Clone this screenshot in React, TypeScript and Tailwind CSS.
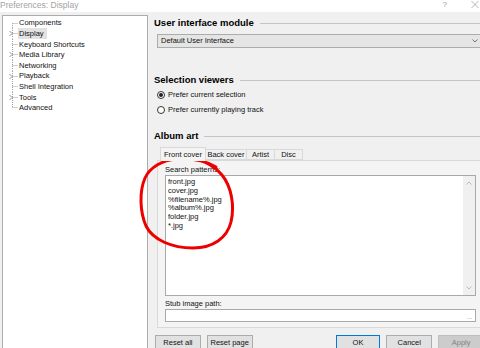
import React from "react";

const treeItems = [
  { label: "Components", expandable: false },
  { label: "Display", expandable: true, selected: true },
  { label: "Keyboard Shortcuts", expandable: false },
  { label: "Media Library", expandable: true },
  { label: "Networking", expandable: false },
  { label: "Playback", expandable: true },
  { label: "Shell Integration", expandable: false },
  { label: "Tools", expandable: true },
  { label: "Advanced", expandable: false },
];

const patterns = ["front.jpg", "cover.jpg", "%filename%.jpg", "%album%.jpg", "folder.jpg", "*.jpg"];

function TreeRow({ label, expandable, selected, first, last }: { label: string; expandable: boolean; selected?: boolean; first: boolean; last: boolean }) {
  return (
    <div className="flex h-[10.6px] items-center">
      <svg width="16" height="10.6" className="shrink-0">
        <line x1="9.5" y1={first ? 5.3 : 0} x2="9.5" y2={last ? 5.3 : 10.6} stroke="#a0a0a0" strokeDasharray="1 1" />
        <line x1="9.5" y1="5.5" x2="15" y2="5.5" stroke="#a0a0a0" strokeDasharray="1 1" />
        {expandable && <path d="M6.5 3 L9 5.5 L6.5 8" fill="none" stroke="#8a8a8a" strokeWidth="0.9" />}
      </svg>
      <span className={selected ? "bg-[#e2e2e2] pl-[1px] pr-[3px] -ml-[1px] leading-[11px]" : "leading-[11px]"}>{label}</span>
    </div>
  );
}

function Heading({ children }: { children: React.ReactNode }) {
  return (
    <div className="flex h-[12px] items-center pl-[2px]">
      <span className="text-[9.5px] font-bold leading-[12px] text-black">{children}</span>
      <div className="ml-[6px] h-px flex-1 bg-[#c4c4c4]" />
    </div>
  );
}

function Radio({ checked, label }: { checked?: boolean; label: string }) {
  return (
    <div className="ml-[5px] flex h-[10px] items-center gap-[3px]">
      <div className="flex h-[8px] w-[8px] items-center justify-center rounded-full border border-[#333] bg-white">
        {checked && <div className="h-[4px] w-[4px] rounded-full bg-[#222]" />}
      </div>
      <span className="leading-[10px]">{label}</span>
    </div>
  );
}

function Button({ label, className }: { label: string; className: string }) {
  return (
    <div className={"flex h-[16px] items-center justify-center border " + className}>
      <span className="leading-[10px]">{label}</span>
    </div>
  );
}

export default function App() {
  return (
    <div
      className="relative h-[348px] w-[480px] overflow-hidden bg-[#f0f0f0] text-[7.5px] text-[#111]"
      style={{ fontFamily: '"Liberation Sans", Arial, sans-serif' }}
    >
      {/* title bar */}
      <div className="flex h-[12px] items-start justify-between bg-white">
        <span className="ml-0 text-[8.5px] leading-[10px] text-[#a3a3a3]">Preferences: Display</span>
        <div className="flex items-start">
          <span className="mr-[24px] text-[8px] leading-[9px] text-[#9a9a9a]">?</span>
          <svg width="8" height="8" className="mr-[1px] mt-[1px]">
            <path d="M0.5 0 L7.5 7 M7.5 0 L0.5 7" stroke="#9a9a9a" strokeWidth="0.7" />
          </svg>
        </div>
      </div>

      <div className="flex">
        {/* tree */}
        <div className="ml-[2px] mt-[3px] h-[400px] w-[146px] shrink-0 border border-[#acacac] bg-white pt-[1.7px]">
          {treeItems.map((item, i) => (
            <TreeRow
              key={item.label}
              label={item.label}
              expandable={item.expandable}
              selected={item.selected}
              first={i === 0}
              last={i === treeItems.length - 1}
            />
          ))}
        </div>

        {/* right pane */}
        <div className="ml-[4px] flex w-[332px] shrink-0 flex-col">
          <div className="mt-[5px]">
            <Heading>User interface module</Heading>
          </div>
          <div className="ml-[5px] mt-[5px] flex h-[14px] items-center justify-between border border-[#acacac] bg-[#e5e5e5] pl-[3px] pr-[5px]">
            <span className="leading-[10px]">Default User Interface</span>
            <svg width="6" height="4">
              <path d="M0.5 0.5 L3 3 L5.5 0.5" fill="none" stroke="#555" strokeWidth="0.8" />
            </svg>
          </div>

          <div className="mt-[26px]">
            <Heading>Selection viewers</Heading>
          </div>
          <div className="mt-[4px]">
            <Radio checked label="Prefer current selection" />
          </div>
          <div className="mt-[5px]">
            <Radio label="Prefer currently playing track" />
          </div>

          <div className="mt-[15px]">
            <Heading>Album art</Heading>
          </div>

          {/* tabs */}
          <div className="ml-[5px] mt-[5px] flex h-[13px] items-end pl-[3px]">
            <div className="relative z-10 -mb-px flex h-[14px] w-[46px] items-center justify-center border border-b-0 border-[#d9d9d9] bg-[#f4f4f4]">
              <span className="leading-[10px]">Front cover</span>
            </div>
            <div className="flex h-[11px] w-[41px] items-center justify-center border border-l-0 border-[#d9d9d9] bg-[#f0f0f0]">
              <span className="leading-[10px]">Back cover</span>
            </div>
            <div className="flex h-[11px] w-[28px] items-center justify-center border border-l-0 border-[#d9d9d9] bg-[#f0f0f0]">
              <span className="leading-[10px]">Artist</span>
            </div>
            <div className="flex h-[11px] w-[28px] items-center justify-center border border-l-0 border-[#d9d9d9] bg-[#f0f0f0]">
              <span className="leading-[10px]">Disc</span>
            </div>
          </div>

          <div className="ml-[5px] flex h-[168px] w-[324px] flex-col border border-[#d9d9d9] bg-[#f4f4f4] px-[7px]">
            <div className="mt-[4px] h-[10px] leading-[10px]">Search patterns:</div>
            <div className="flex h-[121px] w-[311px] border border-[#a9a9a9] bg-white">
              <div className="flex-1 pl-[2px] pt-[2px]">
                {patterns.map((p) => (
                  <div key={p} className="h-[8.8px] leading-[8.8px]">
                    {p}
                  </div>
                ))}
              </div>
              <div className="flex w-[12px] flex-col items-center justify-between bg-[#f0f0f0] py-[5px]">
                <svg width="6" height="4">
                  <path d="M0.5 3.5 L3 1 L5.5 3.5" fill="none" stroke="#b5b5b5" strokeWidth="0.9" />
                </svg>
                <svg width="6" height="4">
                  <path d="M0.5 0.5 L3 3 L5.5 0.5" fill="none" stroke="#b5b5b5" strokeWidth="0.9" />
                </svg>
              </div>
            </div>
            <div className="mt-[3px] h-[10px] leading-[10px]">Stub image path:</div>
            <div className="flex h-[13px] w-[311px] items-end justify-end border border-[#a9a9a9] bg-white pb-[1px] pr-[3px]">
              <span className="text-[6px] leading-[6px] text-[#666]">...</span>
            </div>
          </div>

          {/* buttons */}
          <div className="ml-[3px] mt-[7px] flex">
            <Button label="Reset all" className="w-[46px] border-[#adadad] bg-[#e1e1e1]" />
            <Button label="Reset page" className="ml-[6px] w-[46px] border-[#adadad] bg-[#e1e1e1]" />
            <Button label="OK" className="ml-[83px] w-[45px] border-[#0078d7] bg-[#e1e1e1]" />
            <Button label="Cancel" className="ml-[6px] w-[46px] border-[#adadad] bg-[#e1e1e1]" />
            <Button label="Apply" className="ml-[6px] w-[46px] border-[#bfbfbf] bg-[#cccccc] text-[#838383]" />
          </div>
        </div>
      </div>

      {/* red hand-drawn annotation */}
      <svg className="pointer-events-none absolute left-0 top-0" width="480" height="348">
        <path
          d="M216 167 C204 160, 190 158, 176 159 C163 160, 150 167, 145 178 C139 192, 140 212, 146 226 C153 240, 172 248, 193 248 C213 248, 227 238, 231 222 C235 205, 231 186, 222 175 C215 166, 205 161, 192 157"
          fill="none"
          stroke="#ee0000"
          strokeWidth="3"
          strokeLinecap="round"
        />
      </svg>
    </div>
  );
}
